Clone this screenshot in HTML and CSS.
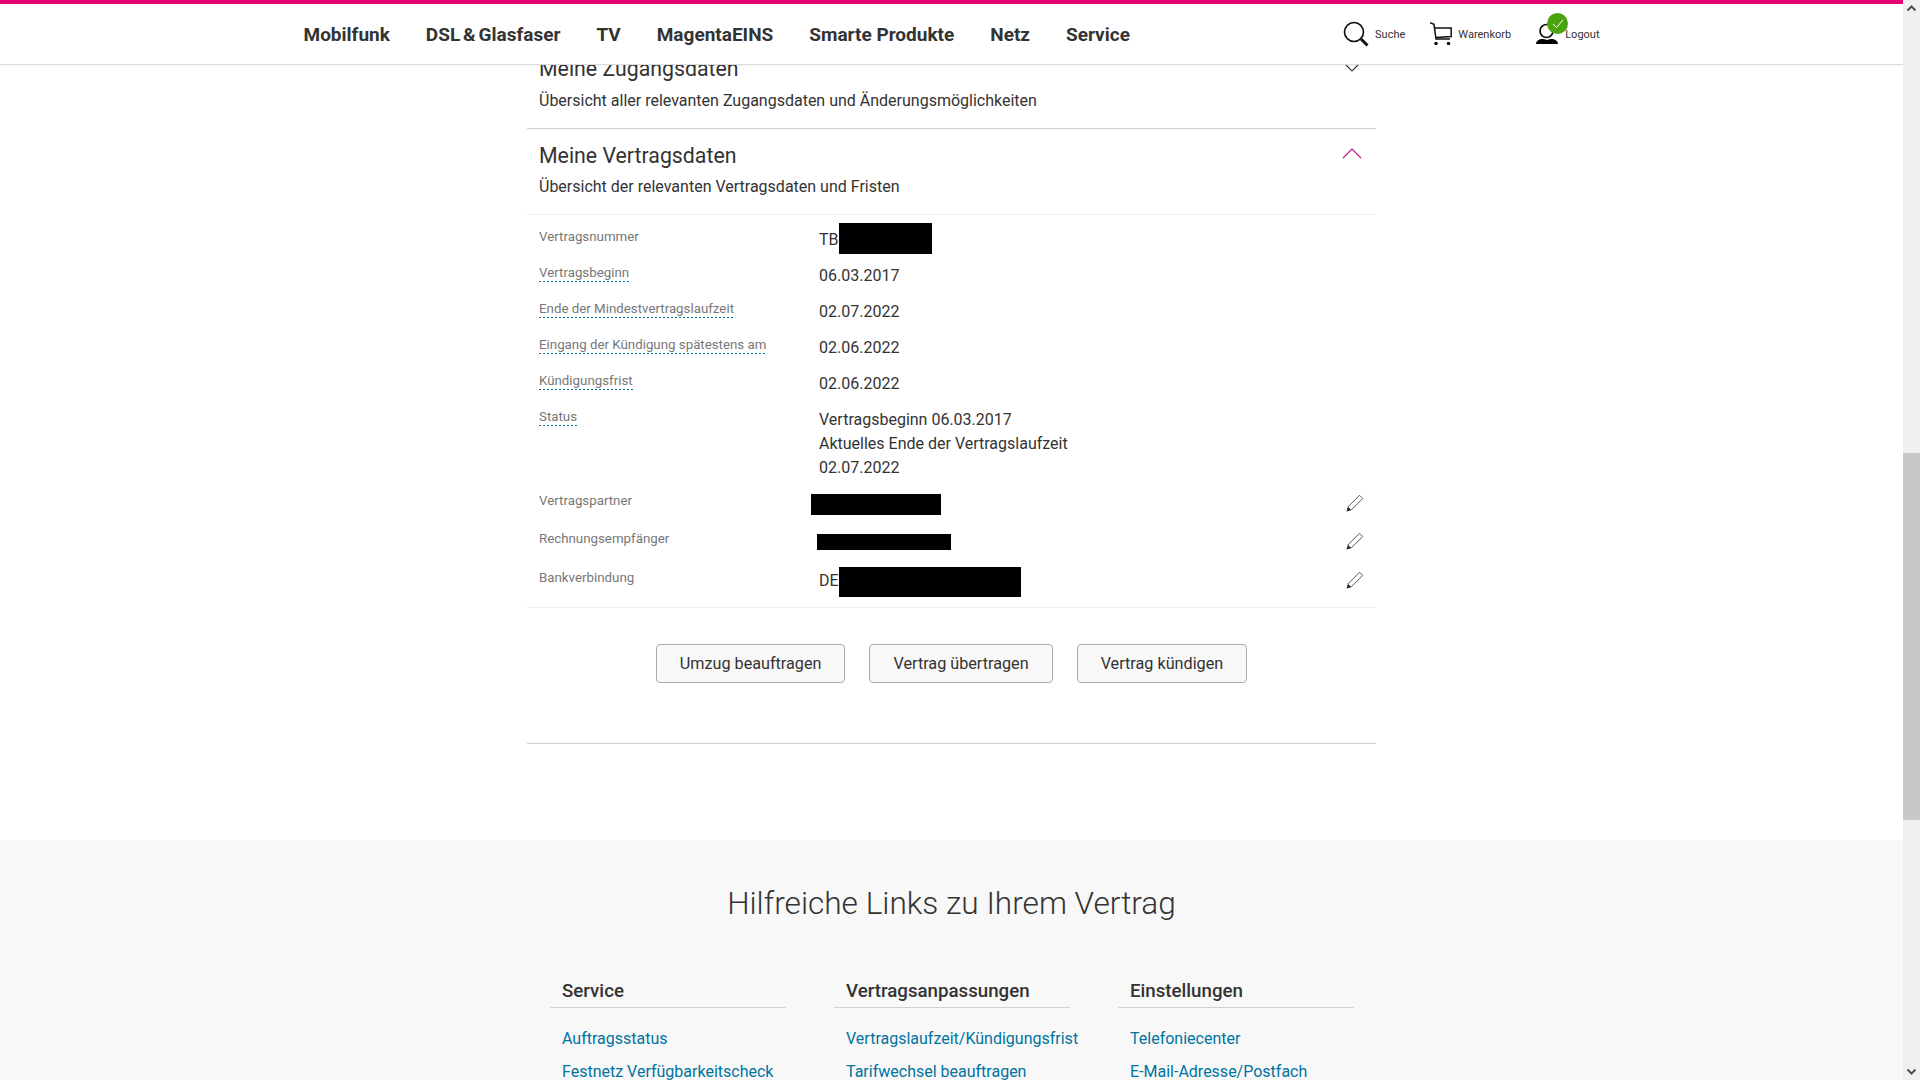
FILE: index.html
```html
<!DOCTYPE html>
<html lang="de">
<head>
    <meta charset="UTF-8">
    <meta name="viewport" content="width=device-width, initial-scale=1.0">
    <title>Meine Vertragsdaten</title>
    <link rel="stylesheet" href="styles.css">
</head>
<body>
    <div class="window">
        <div class="page">
            <header class="header">
                <div class="header-inner">
                    <ul class="nav-links">
                        <li><a href="#">Mobilfunk</a></li>
                        <li><a class="nav-tight" href="#">DSL &amp; Glasfaser</a></li>
                        <li><a href="#">TV</a></li>
                        <li><a href="#">MagentaEINS</a></li>
                        <li><a href="#">Smarte Produkte</a></li>
                        <li><a href="#">Netz</a></li>
                        <li><a href="#">Service</a></li>
                    </ul>
                    <div class="tools">
                        <a class="tool" href="#">
                            <svg width="26" height="26" viewBox="0 0 26 26" fill="none" stroke="#111">
                                <circle cx="11" cy="11" r="9.5" stroke-width="1.7"/>
                                <path d="M18 18l6.500 6.500" stroke-width="3"/>
                            </svg>
                            <span>Suche</span>
                        </a>
                        <a class="tool" href="#">
                            <svg width="22" height="24" viewBox="0 0 22 24" fill="none" stroke="#111" stroke-width="1.500">
                                <path d="M0 0.800l4 1.500 2 14.700h14"/>
                                <path d="M4.500 6h16.700v8.500l-15.200 1"/>
                                <circle cx="6" cy="21.500" r="1.800" fill="#111" stroke="none"/>
                                <circle cx="18.500" cy="21.500" r="1.800" fill="#111" stroke="none"/>
                            </svg>
                            <span>Warenkorb</span>
                        </a>
                        <a class="tool" href="#">
                            <svg width="23" height="24" viewBox="0 0 23 24" fill="none">
                                <circle cx="10.500" cy="9" r="6.500" stroke="#111" stroke-width="1.700"/>
                                <path d="M0 22c0-3 3-5 7-5 2 0 3 1 4 1s2-1 4-1c4 0 7 2 7 5z" fill="#000"/>
                            </svg>
                            <span>Logout</span>
                            <span class="badge">
                                <svg width="12" height="10" viewBox="0 0 12 10" fill="none" stroke="#fff" stroke-width="1">
                                    <path d="M1 5l3.500 3.500L11 1"/>
                                </svg>
                            </span>
                        </a>
                    </div>
                </div>
            </header>

            <main class="content">
                <section class="acc-head acc-first">
                    <div>
                        <h2>Meine Zugangsdaten</h2>
                        <p>Übersicht aller relevanten Zugangsdaten und Änderungsmöglichkeiten</p>
                    </div>
                    <svg class="chevron chevron-down" width="18" height="10" viewBox="0 0 18 10" fill="none" stroke="#333" stroke-width="1.100">
                        <path d="M1 1l8 8 8-8"/>
                    </svg>
                </section>

                <section class="acc-head acc-open">
                    <div>
                        <h2>Meine Vertragsdaten</h2>
                        <p>Übersicht der relevanten Vertragsdaten und Fristen</p>
                    </div>
                    <svg class="chevron chevron-up" width="20" height="11" viewBox="0 0 20 11" fill="none" stroke="#c2187f" stroke-width="1.200">
                        <path d="M1 10l9-9 9 9"/>
                    </svg>
                </section>

                <div class="data-table">
                    <div class="row">
                        <div class="label">Vertragsnummer</div>
                        <div class="value">TB<span class="redact redact-nr"></span></div>
                    </div>
                    <div class="row">
                        <div class="label"><span class="hint">Vertragsbeginn</span></div>
                        <div class="value">06.03.2017</div>
                    </div>
                    <div class="row">
                        <div class="label"><span class="hint">Ende der Mindestvertragslaufzeit</span></div>
                        <div class="value">02.07.2022</div>
                    </div>
                    <div class="row">
                        <div class="label"><span class="hint">Eingang der Kündigung spätestens am</span></div>
                        <div class="value">02.06.2022</div>
                    </div>
                    <div class="row">
                        <div class="label"><span class="hint">Kündigungsfrist</span></div>
                        <div class="value">02.06.2022</div>
                    </div>
                    <div class="row row-status">
                        <div class="label"><span class="hint">Status</span></div>
                        <div class="value">Vertragsbeginn 06.03.2017<br>Aktuelles Ende der Vertragslaufzeit<br>02.07.2022</div>
                    </div>
                    <div class="row row-edit row-partner">
                        <div class="label">Vertragspartner</div>
                        <div class="value"><span class="redact redact-partner"></span></div>
                        <svg class="pencil" width="18" height="18" viewBox="0 0 18 18" fill="none" stroke="#333"><path d="M1.800 13L13.500 1.300l3.200 3.200L5 16.200z" stroke-width="0.800"/><path d="M0.500 17.500l1.300-4.500 3.200 3.200z" fill="#222" stroke="none"/></svg>
                    </div>
                    <div class="row row-edit">
                        <div class="label">Rechnungsempfänger</div>
                        <div class="value"><span class="redact redact-bill"></span></div>
                        <svg class="pencil" width="18" height="18" viewBox="0 0 18 18" fill="none" stroke="#333"><path d="M1.800 13L13.500 1.300l3.200 3.200L5 16.200z" stroke-width="0.800"/><path d="M0.500 17.500l1.300-4.500 3.200 3.200z" fill="#222" stroke="none"/></svg>
                    </div>
                    <div class="row row-edit">
                        <div class="label">Bankverbindung</div>
                        <div class="value">DE<span class="redact redact-bank"></span></div>
                        <svg class="pencil" width="18" height="18" viewBox="0 0 18 18" fill="none" stroke="#333"><path d="M1.800 13L13.500 1.300l3.200 3.200L5 16.200z" stroke-width="0.800"/><path d="M0.500 17.500l1.300-4.500 3.200 3.200z" fill="#222" stroke="none"/></svg>
                    </div>
                </div>

                <div class="actions">
                    <button>Umzug beauftragen</button>
                    <button>Vertrag übertragen</button>
                    <button>Vertrag kündigen</button>
                </div>
            </main>

            <!-- Links section -->
            <section class="links">
                <h2>Hilfreiche Links zu Ihrem Vertrag</h2>
                <div class="link-columns">
                    <div class="link-col">
                        <h3>Service</h3>
                        <a href="#">Auftragsstatus</a>
                        <a href="#">Festnetz Verfügbarkeitscheck</a>
                    </div>
                    <div class="link-col">
                        <h3>Vertragsanpassungen</h3>
                        <a href="#">Vertragslaufzeit/Kündigungsfrist</a>
                        <a href="#">Tarifwechsel beauftragen</a>
                    </div>
                    <div class="link-col">
                        <h3>Einstellungen</h3>
                        <a href="#">Telefoniecenter</a>
                        <a href="#">E-Mail-Adresse/Postfach</a>
                    </div>
                </div>
            </section>
        </div>

        <div class="scrollbar">
            <svg width="17" height="17" viewBox="0 0 17 17" fill="none" stroke="#505050" stroke-width="2"><path d="M4.500 10.500l4-4 4 4"/></svg>
            <div class="track"><div class="thumb"></div></div>
            <svg width="17" height="17" viewBox="0 0 17 17" fill="none" stroke="#505050" stroke-width="2"><path d="M4.500 6.500l4 4 4-4"/></svg>
        </div>
    </div>
</body>
</html>
```

FILE: styles.css
```css
* {
    font-family: Roboto, 'Liberation Sans', sans-serif;
    margin: 0;
    padding: 0;
    box-sizing: border-box;
}

body {
    background: white;
    color: #333;
    height: 100vh;
    overflow: hidden;
}

a {
    text-decoration: none;
}

.window {
    display: flex;
    height: 1080px;
}

.page {
    flex-grow: 1;
    position: relative;
    overflow: hidden;
}

/* Header */
.header {
    position: absolute;
    top: 0;
    left: 0;
    right: 0;
    z-index: 2;
    height: 65px;
    background: white;
    border-top: 4px solid #e20074;
    border-bottom: 1px solid #dcdcdc;
    box-shadow: 0 1px 2px rgba(0, 0, 0, 0.05);
}

.header-inner {
    width: 1296px;
    height: 60px;
    margin: 0 auto;
    display: flex;
    justify-content: space-between;
    align-items: center;
}

.nav-links {
    list-style: none;
    display: flex;
    gap: 36px;
}

.nav-links a {
    color: #333;
    font-size: 19px;
    font-weight: 700;
}

.nav-links .nav-tight {
    word-spacing: -1.8px;
}

.tools {
    display: flex;
    gap: 25px;
}

.tool {
    display: flex;
    align-items: center;
    gap: 6px;
    color: #333;
    font-size: 11px;
    position: relative;
}

.badge {
    position: absolute;
    left: 11px;
    top: -8px;
    width: 21px;
    height: 21px;
    border-radius: 50%;
    background: #4aa30f;
    display: flex;
    align-items: center;
    justify-content: center;
}

/* Accordion */
.content {
    width: 849px;
    margin: 0 auto;
    padding-top: 42px;
    padding-bottom: 96px;
}

.acc-head {
    display: flex;
    justify-content: space-between;
    align-items: flex-start;
    padding: 13px 12px 15px;
    border-bottom: 1px solid #d0d0d0;
}

.acc-head h2 {
    font-size: 21.3px;
    font-weight: 400;
    line-height: 28px;
    margin-bottom: 5px;
}

.acc-first h2 {
    margin-bottom: 6px;
}

.acc-head p {
    font-size: 16px;
    line-height: 24px;
}

.acc-open {
    border-bottom-color: #eeeeee;
}

.chevron-down {
    margin-top: 7px;
    margin-right: 3px;
}

.chevron-up {
    margin-top: 6px;
    margin-right: 2px;
}

/* Data rows */
.data-table {
    padding: 12px 12px 0;
    border-bottom: 1px solid #eeeeee;
}

.row {
    display: grid;
    grid-template-columns: 280px 1fr 18px;
    padding-bottom: 11px;
}

.row-edit {
    height: 39px;
}

.row-partner {
    height: 38px;
}

.label {
    font-size: 13.3px;
    line-height: 20px;
    color: #777777;
}

.hint {
    display: inline-block;
    line-height: 17px;
    padding-bottom: 1px;
    background: repeating-linear-gradient(90deg, #00739f 0 2px, transparent 2px 4px) left bottom / 100% 1px no-repeat;
}

.value {
    font-size: 16px;
    line-height: 24px;
    padding-top: 1px;
    position: relative;
}

.redact {
    position: absolute;
    background: black;
}

.redact-nr {
    left: 20px;
    top: -4px;
    width: 93px;
    height: 31px;
}

.redact-partner {
    left: -8px;
    top: 3px;
    width: 130px;
    height: 21px;
}

.redact-bill {
    left: -2px;
    top: 5px;
    width: 134px;
    height: 16px;
}

.redact-bank {
    left: 20px;
    top: -1px;
    width: 182px;
    height: 30px;
}

.pencil {
    margin-top: 3px;
}

/* Buttons */
.actions {
    display: flex;
    justify-content: center;
    gap: 24px;
    padding: 36px 0 60px;
    border-bottom: 1px solid #d0d0d0;
}

.actions button {
    height: 39px;
    padding: 0 23px;
    font-size: 16.2px;
    color: #333;
    background: #f8f8f8;
    border: 1px solid #aaaaaa;
    border-radius: 4px;
}

/* Links section */
.links {
    background: #f8f8f8;
    padding-top: 44px;
    height: 240px;
}

.links h2 {
    font-size: 31.6px;
    font-weight: 300;
    line-height: 40px;
    text-align: center;
    margin-bottom: 55px;
}

.link-columns {
    width: 804px;
    margin: 0 auto;
    display: grid;
    grid-template-columns: repeat(3, 236px);
    gap: 48px;
}

.link-col h3 {
    font-size: 18.7px;
    font-weight: 500;
    line-height: 24px;
    padding: 0 12.5px 4px;
    border-bottom: 1px solid #d0d0d0;
    margin-bottom: 19px;
}

.link-col a {
    display: block;
    font-size: 16px;
    line-height: 24px;
    color: #00739f;
    padding-left: 12.5px;
    margin-bottom: 9px;
    white-space: nowrap;
}

/* Fake browser scrollbar */
.scrollbar {
    width: 17px;
    background: #f0f0f0;
    display: flex;
    flex-direction: column;
}

.track {
    flex-grow: 1;
}

.thumb {
    margin-top: 436px;
    height: 367px;
    background: #c8c8c8;
}
```
